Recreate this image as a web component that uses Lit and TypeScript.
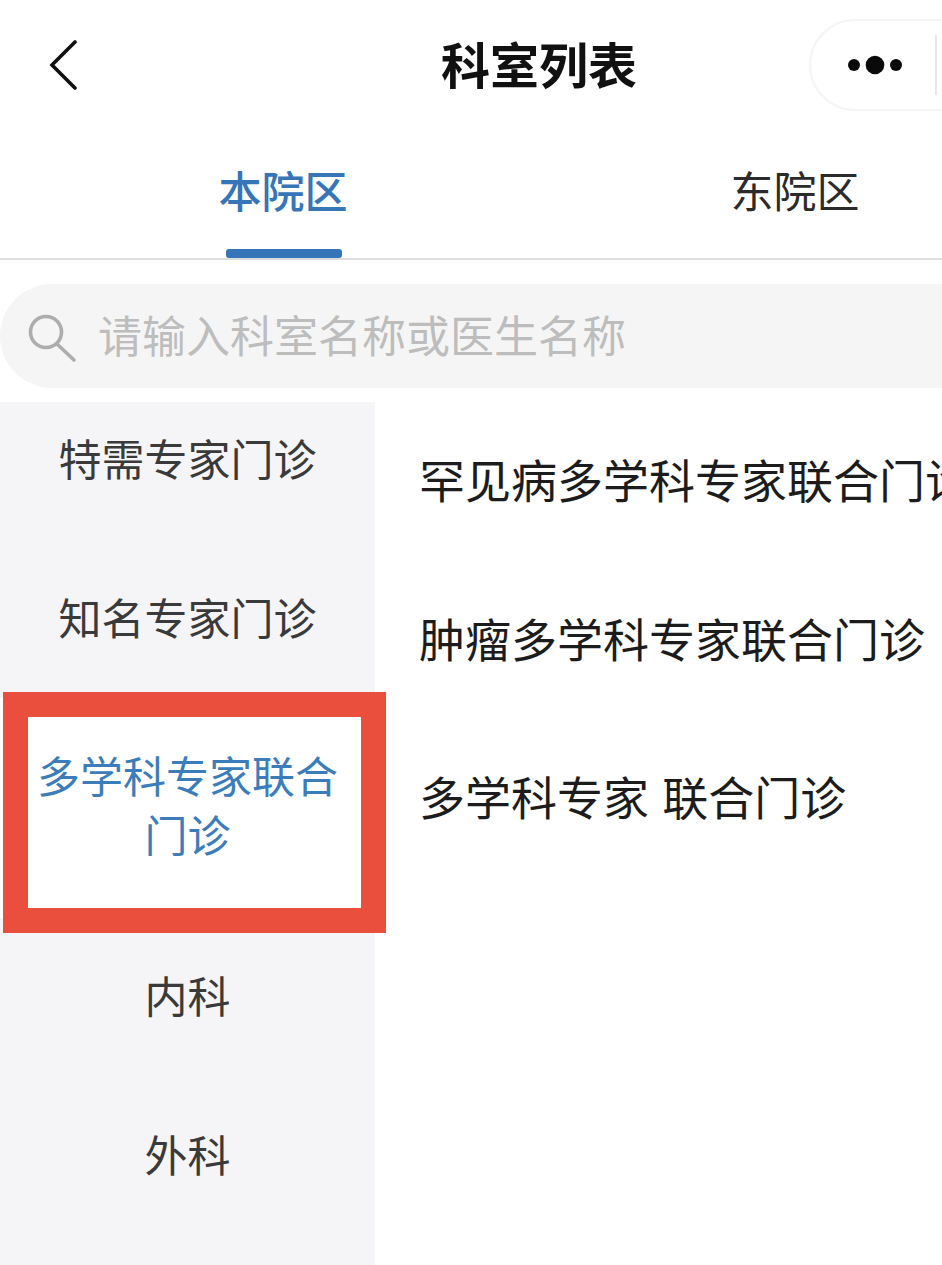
import { LitElement, css, html } from 'lit'
import { customElement } from 'lit/decorators.js'

const sideItems = ['特需专家门诊', '知名专家门诊', '多学科专家联合门诊', '内科', '外科']
const clinics = ['罕见病多学科专家联合门诊', '肿瘤多学科专家联合门诊', '多学科专家 联合门诊']

@customElement('app-root')
export class AppRoot extends LitElement {
  protected render() {
    return html`
      <header class="nav">
        <svg class="back" width="30" height="50" viewBox="0 0 30 50">
          <path d="M27 2 L4 25 L27 48" fill="none" stroke="#111" stroke-width="3.6" stroke-linecap="round" stroke-linejoin="miter" />
        </svg>
        <h1 class="title">科室列表</h1>
        <div class="capsule">
          <svg class="dots" width="56" height="20" viewBox="0 0 56 20">
            <circle cx="6" cy="10" r="6" fill="#0a0a0a" />
            <circle cx="27" cy="10" r="9.3" fill="#0a0a0a" />
            <circle cx="48" cy="10" r="6" fill="#0a0a0a" />
          </svg>
          <span class="divider"></span>
        </div>
      </header>

      <nav class="tabs">
        <div class="tab active"><span>本院区</span></div>
        <div class="tab"><span>东院区</span></div>
      </nav>

      <div class="search">
        <svg width="50" height="50" viewBox="0 0 50 50">
          <circle cx="18" cy="18" r="15.5" fill="none" stroke="#adadad" stroke-width="3.6" />
          <path d="M29 30 L46 46" fill="none" stroke="#adadad" stroke-width="3.6" stroke-linecap="round" />
        </svg>
        <span class="placeholder">请输入科室名称或医生名称</span>
      </div>

      <div class="body">
        <aside class="side">
          <div class="side-list">
            ${sideItems.map(
              (item, i) => html`<div class="side-item ${i === 2 ? 'current' : ''}"><span>${item}</span></div>`
            )}
          </div>
          <div class="marker"></div>
        </aside>
        <main class="list">
          ${clinics.map((c) => html`<div class="clinic">${c}</div>`)}
        </main>
      </div>
    `
  }

  static styles = css`
    :host {
      display: block;
      width: 942px;
      height: 1265px;
      overflow: hidden;
      background: #fff;
      font-family: 'Noto Sans CJK SC', 'Noto Sans', sans-serif;
      color: #1a1a1a;
    }

    .nav {
      display: flex;
      align-items: center;
      height: 130px;
      padding-left: 48px;
    }
    .back {
      flex: none;
    }
    .title {
      flex: none;
      margin: -4px 0 0 363px;
      width: 196px;
      font-size: 49px;
      line-height: 60px;
      font-weight: 700;
      color: #111;
    }
    .capsule {
      flex: none;
      display: flex;
      align-items: center;
      box-sizing: border-box;
      width: 220px;
      height: 92px;
      margin: 0 0 0 172px;
      padding-left: 37px;
      border: 2px solid #f5f5f5;
      border-radius: 46px;
    }
    .divider {
      width: 2px;
      height: 60px;
      margin-left: 31px;
      background: #e6e6e6;
    }

    .tabs {
      display: grid;
      grid-template-columns: 512px 512px;
      height: 128px;
      padding-left: 27px;
      border-bottom: 2px solid #dedede;
    }
    .tab {
      position: relative;
      display: flex;
      justify-content: center;
      align-items: center;
      padding-bottom: 10px;
      font-size: 43px;
      color: #2b2b2b;
    }
    .tab.active {
      color: #3575b8;
      font-weight: 500;
    }
    .tab.active::after {
      content: '';
      position: absolute;
      bottom: 0;
      left: 199px;
      width: 116px;
      height: 9px;
      border-radius: 3px;
      background: #3575b8;
    }

    .search {
      display: flex;
      align-items: center;
      gap: 20px;
      height: 104px;
      width: 1000px;
      margin-top: 24px;
      padding-left: 28px;
      box-sizing: border-box;
      border-radius: 52px;
      background: #f5f5f5;
    }
    .search svg {
      flex: none;
      margin-top: 6px;
    }
    .placeholder {
      font-size: 44px;
      color: #bdbdbd;
      margin-top: -4px;
    }

    .body {
      display: flex;
      margin-top: 14px;
      height: 863px;
    }
    .side {
      position: relative;
      flex: none;
      width: 375px;
      background: #f5f5f7;
    }
    .side-list {
      height: 100%;
      overflow: hidden;
    }
    .side-item {
      display: flex;
      justify-content: center;
      align-items: center;
      box-sizing: border-box;
      height: 159px;
      padding: 0 34px 4px;
      font-size: 43px;
      line-height: 59px;
      text-align: center;
      color: #3a3a3a;
    }
    .side-item:first-child {
      height: 137px;
      padding-bottom: 26px;
    }
    .side-item.current {
      height: 220px;
      padding-bottom: 8px;
      background: #fff;
      color: #3b7dbb;
    }
    .side-item.current + .side-item,
    .side-item.current + .side-item + .side-item {
      padding-bottom: 6px;
    }

    .marker {
      position: absolute;
      left: 3px;
      top: 290px;
      box-sizing: border-box;
      width: 383px;
      height: 241px;
      border: 25px solid #ea4f3d;
    }

    .list {
      flex: 1;
      min-width: 0;
      padding-left: 418px;
      margin-left: -374px;
      overflow: hidden;
    }
    .clinic {
      height: 158.5px;
      padding-top: 43px;
      box-sizing: border-box;
      font-size: 46px;
      line-height: 66px;
      word-spacing: 3px;
      white-space: nowrap;
      color: #1c1c1c;
    }
  `
}
